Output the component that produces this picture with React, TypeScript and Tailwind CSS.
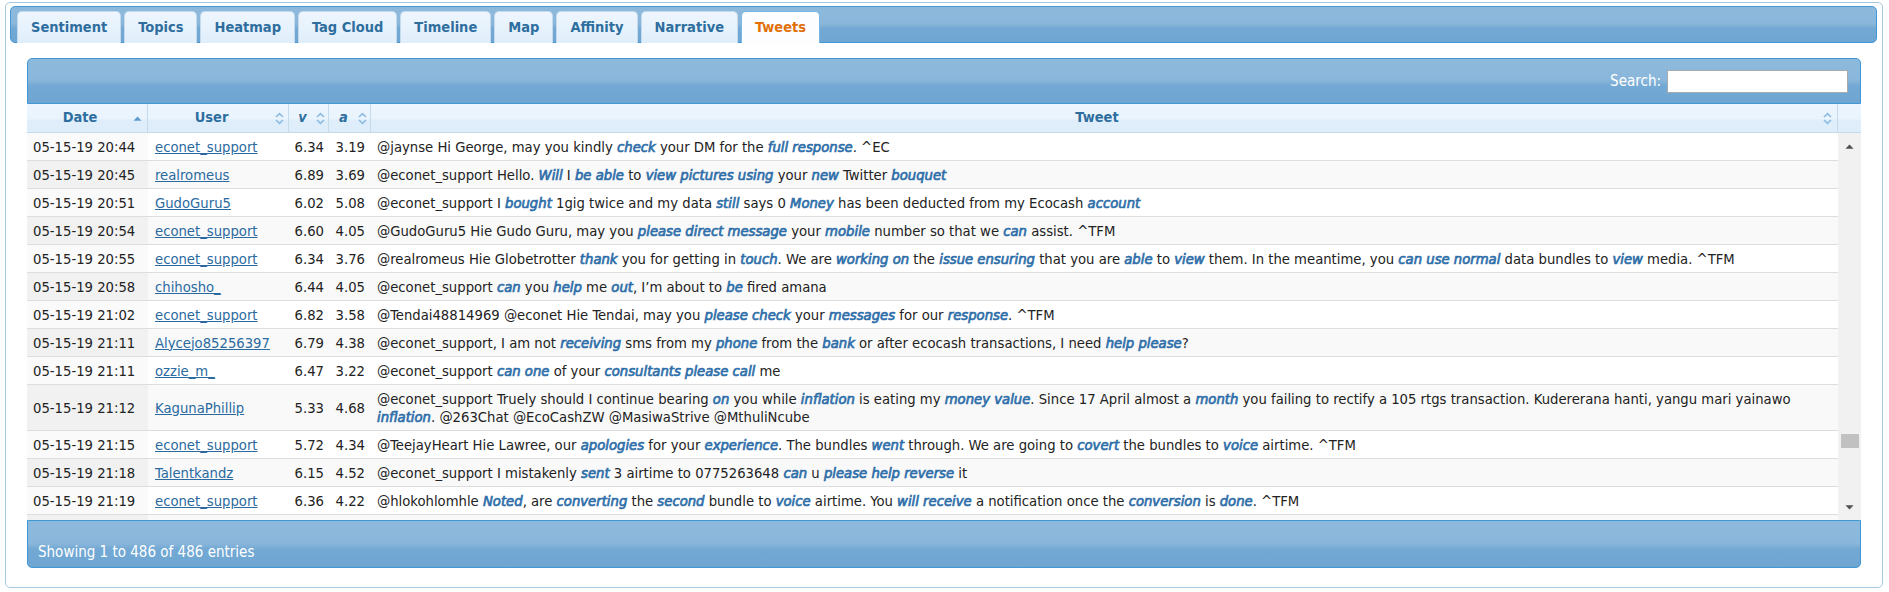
import React from "react";

const tabs = ["Sentiment", "Topics", "Heatmap", "Tag Cloud", "Timeline", "Map", "Affinity", "Narrative", "Tweets"];

const rows = [
  { date: "05-15-19 20:44", user: "econet_support", v: "6.34", a: "3.19", text: "@jaynse Hi George, may you kindly *check* your DM for the *full response*. ^EC" },
  { date: "05-15-19 20:45", user: "realromeus", v: "6.89", a: "3.69", text: "@econet_support Hello. *Will* I *be able* to *view pictures using* your *new* Twitter *bouquet*" },
  { date: "05-15-19 20:51", user: "GudoGuru5", v: "6.02", a: "5.08", text: "@econet_support I *bought* 1gig twice and my data *still* says 0 *Money* has been deducted from my Ecocash *account*" },
  { date: "05-15-19 20:54", user: "econet_support", v: "6.60", a: "4.05", text: "@GudoGuru5 Hie Gudo Guru, may you *please direct message* your *mobile* number so that we *can* assist. ^TFM" },
  { date: "05-15-19 20:55", user: "econet_support", v: "6.34", a: "3.76", text: "@realromeus Hie Globetrotter *thank* you for getting in *touch*. We are *working on* the *issue ensuring* that you are *able* to *view* them. In the meantime, you *can use normal* data bundles to *view* media. ^TFM" },
  { date: "05-15-19 20:58", user: "chihosho_", v: "6.44", a: "4.05", text: "@econet_support *can* you *help* me *out*, I\u2019m about to *be* fired amana" },
  { date: "05-15-19 21:02", user: "econet_support", v: "6.82", a: "3.58", text: "@Tendai48814969 @econet Hie Tendai, may you *please check* your *messages* for our *response*. ^TFM" },
  { date: "05-15-19 21:11", user: "Alycejo85256397", v: "6.79", a: "4.38", text: "@econet_support, I am not *receiving* sms from my *phone* from the *bank* or after ecocash transactions, I need *help please*?" },
  { date: "05-15-19 21:11", user: "ozzie_m_", v: "6.47", a: "3.22", text: "@econet_support *can one* of your *consultants please call* me" },
  { date: "05-15-19 21:12", user: "KagunaPhillip", v: "5.33", a: "4.68", text: "@econet_support Truely should I continue bearing *on* you while *inflation* is eating my *money value*. Since 17 April almost a *month* you failing to rectify a 105 rtgs transaction. Kudererana hanti, yangu mari yainawo *inflation*. @263Chat @EcoCashZW @MasiwaStrive @MthuliNcube" },
  { date: "05-15-19 21:15", user: "econet_support", v: "5.72", a: "4.34", text: "@TeejayHeart Hie Lawree, our *apologies* for your *experience*. The bundles *went* through. We are going to *covert* the bundles to *voice* airtime. ^TFM" },
  { date: "05-15-19 21:18", user: "Talentkandz", v: "6.15", a: "4.52", text: "@econet_support I mistakenly *sent* 3 airtime to 0775263648 *can* u *please help reverse* it" },
  { date: "05-15-19 21:19", user: "econet_support", v: "6.36", a: "4.22", text: "@hlokohlomhle *Noted*, are *converting* the *second* bundle to *voice* airtime. You *will receive* a notification once the *conversion* is *done*. ^TFM" },
];

// keywords: oblique with a light stroke, keeps the narrow widths of the reference
function Tweet({ text }: { text: string }) {
  return (
    <>
      {text.split(/(\*[^*]+\*)/).map((p, i) =>
        p.startsWith("*") ? (
          <em key={i} className="font-normal text-[#2f6fa9] [-webkit-text-stroke:0.7px_#2f6fa9]">
            {p.slice(1, -1)}
          </em>
        ) : (
          <span key={i}>{p}</span>
        )
      )}
    </>
  );
}

function SortBoth() {
  return (
    <svg width="9" height="13" viewBox="0 0 9 13" className="shrink-0">
      <path d="M1 5 L4.5 1.6 L8 5" fill="none" stroke="#8dbce3" strokeWidth="1.7" />
      <path d="M1 8 L4.5 11.4 L8 8" fill="none" stroke="#8dbce3" strokeWidth="1.7" />
    </svg>
  );
}

function SortAsc() {
  return (
    <svg width="9" height="5" viewBox="0 0 9 5" className="shrink-0">
      <path d="M0.5 4.8 L4.5 0.6 L8.5 4.8Z" fill="#5d9bd1" />
    </svg>
  );
}

const wave =
  "bg-[linear-gradient(to_bottom,#8dbadc_0%,#89b6da_48%,#80b0d7_54%,#73a9d4_60%,#6ea5d2_100%)]";

export default function App() {
  return (
    <div className="font-['DejaVu_Sans_Condensed','DejaVu_Sans',sans-serif] font-stretch-condensed text-[#222]">
      <div className="mt-[2px] ml-[5px] mr-[6px] border border-[#a6c9e2] rounded-[5px] bg-white pt-[3px] pl-[4px] pr-[5px]">
        {/* Tabs */}
        <div className={`h-[37px] border border-[#4297d7] rounded-[5px] ${wave} flex items-end gap-[3px] pl-[6px]`}>
          {tabs.map((t) => (
            <div
              key={t}
              className={`h-[32px] -mb-px px-[13px] flex items-center rounded-t-[5px] border border-b-0 text-[14.5px] font-bold ${
                t === "Tweets"
                  ? "bg-[#fbfdff] border-[#79b7e7] text-[#e17009]"
                  : "bg-[linear-gradient(to_bottom,#eef6fe,#dfeefb)] border-[#c5dbec] text-[#2e6e9e]"
              }`}
            >
              {t}
            </div>
          ))}
        </div>

        {/* Panel */}
        <div className="pt-[15px] pb-[19px] pl-[17px] pr-[16px]">
          {/* Toolbar */}
          <div className={`h-[46px] border border-[#4297d7] rounded-t-[5px] ${wave} flex items-center justify-end pr-[12px]`}>
            <span className="text-white text-[15px] mr-[6px]">Search:</span>
            <input className="w-[181px] h-[23px] bg-white border border-[#aaa] outline-none" />
          </div>

          {/* Header */}
          <div className="grid grid-cols-[121px_141px_40px_42px_1fr_23px] h-[29px] bg-[linear-gradient(to_bottom,#edf5fe_0%,#eaf4fd_50%,#e0eefb_56%,#deedfb_100%)] text-[#2e6e9e] text-[14.5px] font-bold">
            <div className="flex items-center border-r border-b border-[#c5dbec] pr-[5px]">
              <span className="flex-1 text-center">Date</span>
              <SortAsc />
            </div>
            <div className="flex items-center border-r border-b border-[#c5dbec] pr-[4px]">
              <span className="flex-1 text-center">User</span>
              <SortBoth />
            </div>
            <div className="flex items-center border-r border-b border-[#c5dbec] pr-[3px]">
              <span className="flex-1 text-center italic">v</span>
              <SortBoth />
            </div>
            <div className="flex items-center border-r border-b border-[#c5dbec] pr-[3px]">
              <span className="flex-1 text-center italic">a</span>
              <SortBoth />
            </div>
            <div className="flex items-center border-r border-b border-[#c5dbec] pr-[5px]">
              <span className="flex-1 text-center">Tweet</span>
              <SortBoth />
            </div>
            <div className="border-b border-[#c5dbec]" />
          </div>

          {/* Body */}
          <div className="flex h-[387px]">
            <div className="flex-1 overflow-hidden">
              <table className="w-full table-fixed border-collapse text-[14.7px] leading-[18px]">
                <colgroup>
                  <col className="w-[121px]" />
                  <col className="w-[141px]" />
                  <col className="w-[40px]" />
                  <col className="w-[42px]" />
                  <col />
                </colgroup>
                <tbody>
                  {rows.map((r, i) => {
                    const odd = i % 2 === 0;
                    return (
                      <tr key={i} className={`border-b border-[#ddd] ${odd ? "bg-white" : "bg-[#f9f9f9]"}`}>
                        <td className={`px-[6px] py-[4.5px] align-middle whitespace-nowrap ${odd ? "bg-[#fafafa]" : "bg-[#f1f1f1]"}`}>{r.date}</td>
                        <td className="px-[7px] py-[4.5px] align-middle">
                          <a href="#" className="underline text-[#2a6aa0]">
                            {r.user}
                          </a>
                        </td>
                        <td className="pl-[2px] pr-[5px] py-[4.5px] text-right align-middle">{r.v}</td>
                        <td className="pl-[2px] pr-[6px] py-[4.5px] text-right align-middle">{r.a}</td>
                        <td className="px-[6px] py-[4.5px] align-middle">
                          <Tweet text={r.text} />
                        </td>
                      </tr>
                    );
                  })}
                  <tr className="bg-[#f9f9f9]">
                    <td className="h-[28px] bg-[#f1f1f1]" />
                    <td />
                    <td />
                    <td />
                    <td />
                  </tr>
                </tbody>
              </table>
            </div>
            {/* Scrollbar */}
            <div className="w-[23px] bg-[#f1f1f1] flex flex-col items-center">
              <svg width="9" height="5" viewBox="0 0 9 5" className="mt-[11px]">
                <path d="M0.5 4.8 L4.5 0.5 L8.5 4.8Z" fill="#505050" />
              </svg>
              <div className="mt-[285px] w-[18px] h-[14px] bg-[#c1c1c1]" />
              <div className="flex-1" />
              <svg width="9" height="5" viewBox="0 0 9 5" className="mb-[10px]">
                <path d="M0.5 0.2 L4.5 4.5 L8.5 0.2Z" fill="#505050" />
              </svg>
            </div>
          </div>

          {/* Footer */}
          <div className={`h-[48px] border border-[#4297d7] rounded-b-[5px] ${wave} pl-[10px] pt-[20px] text-white text-[15px]`}>
            Showing 1 to 486 of 486 entries
          </div>
        </div>
      </div>
    </div>
  );
}
